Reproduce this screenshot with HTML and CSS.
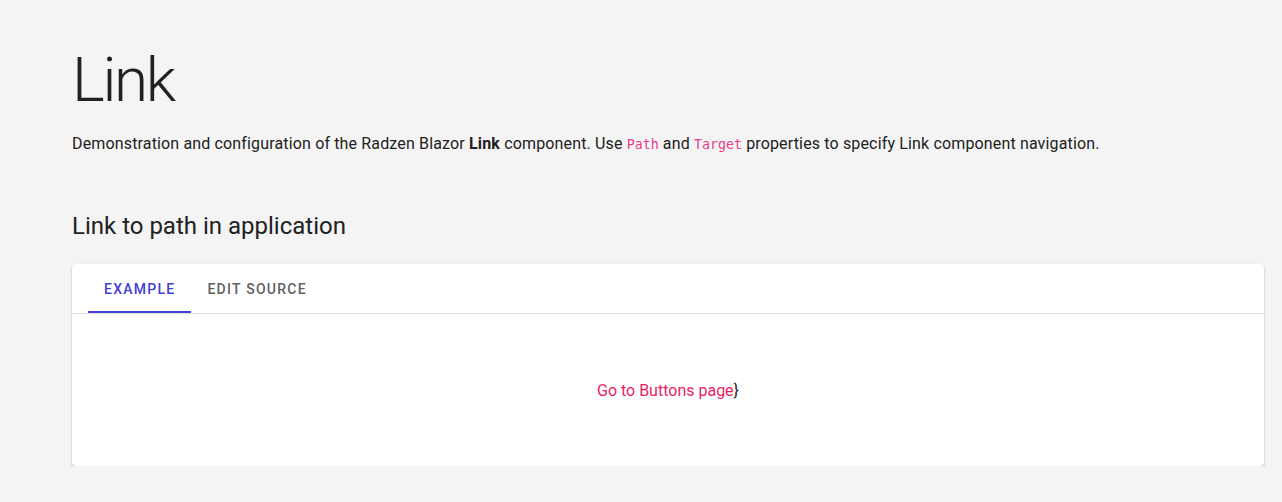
FILE: index.html
```html
<!DOCTYPE html>
<html>
<head>
<meta charset="utf-8">
<link rel="stylesheet" href="styles.css">
</head>
<body>
<main class="page">
  <h1 class="title">Link</h1>
  <p class="lead">Demonstration and configuration of the Radzen Blazor <strong>Link</strong> component. Use <code>Path</code> and <code>Target</code> properties to specify Link component navigation.</p>
  <h2 class="section">Link to path in application</h2>
  <div class="card">
    <div class="tabs">
      <div class="tab active">Example</div>
      <div class="tab">Edit Source</div>
    </div>
    <div class="panel">
      <a class="link" href="#">Go to Buttons page</a><span class="brace">}</span>
    </div>
  </div>
</main>
</body>
</html>
```
FILE: styles.css
```css
html, body {
  margin: 0;
  padding: 0;
  background: #f4f4f4;
  font-family: Roboto, "Noto Sans", sans-serif;
  color: #212121;
}
.page {
  padding: 40px 18px 0 72px;
}
.title {
  font-size: 62px;
  font-weight: 300;
  line-height: 80px;
  margin: 0 0 12px 0;
  letter-spacing: -2.3px;
}
.lead {
  font-size: 16px;
  line-height: 24px;
  letter-spacing: 0.15px;
  margin: 0 0 53px 0;
}
.lead strong {
  font-weight: 700;
}
.lead code {
  font-family: "DejaVu Sans Mono", monospace;
  font-size: 13.3px;
  letter-spacing: 0;
  color: #e83e8c;
}
.section {
  font-size: 24px;
  font-weight: 400;
  line-height: 32px;
  margin: 0 0 22px 0;
}
.card {
  background: #fff;
  border-radius: 4px;
  box-shadow: 0 2px 2px rgba(0,0,0,0.18), 0 1px 3px rgba(0,0,0,0.12);
  width: 1192px;
}
.tabs {
  display: flex;
  padding: 0 16px;
  border-bottom: 1px solid #e0e0e0;
  height: 49px;
}
.tab {
  text-transform: uppercase;
  font-size: 14px;
  font-weight: 500;
  letter-spacing: 1.25px;
  color: #616161;
  padding: 1px 16px 0 16px;
  line-height: 48px;
}
.tab.active {
  color: #4340d2;
  border-bottom: 2px solid #4340d2;
  height: 46px;
}
.panel {
  height: 152px;
  display: flex;
  align-items: center;
  justify-content: center;
  font-size: 16px;
}
.link {
  color: #e91e63;
  text-decoration: none;
}
.brace {
  color: #212121;
}
```
